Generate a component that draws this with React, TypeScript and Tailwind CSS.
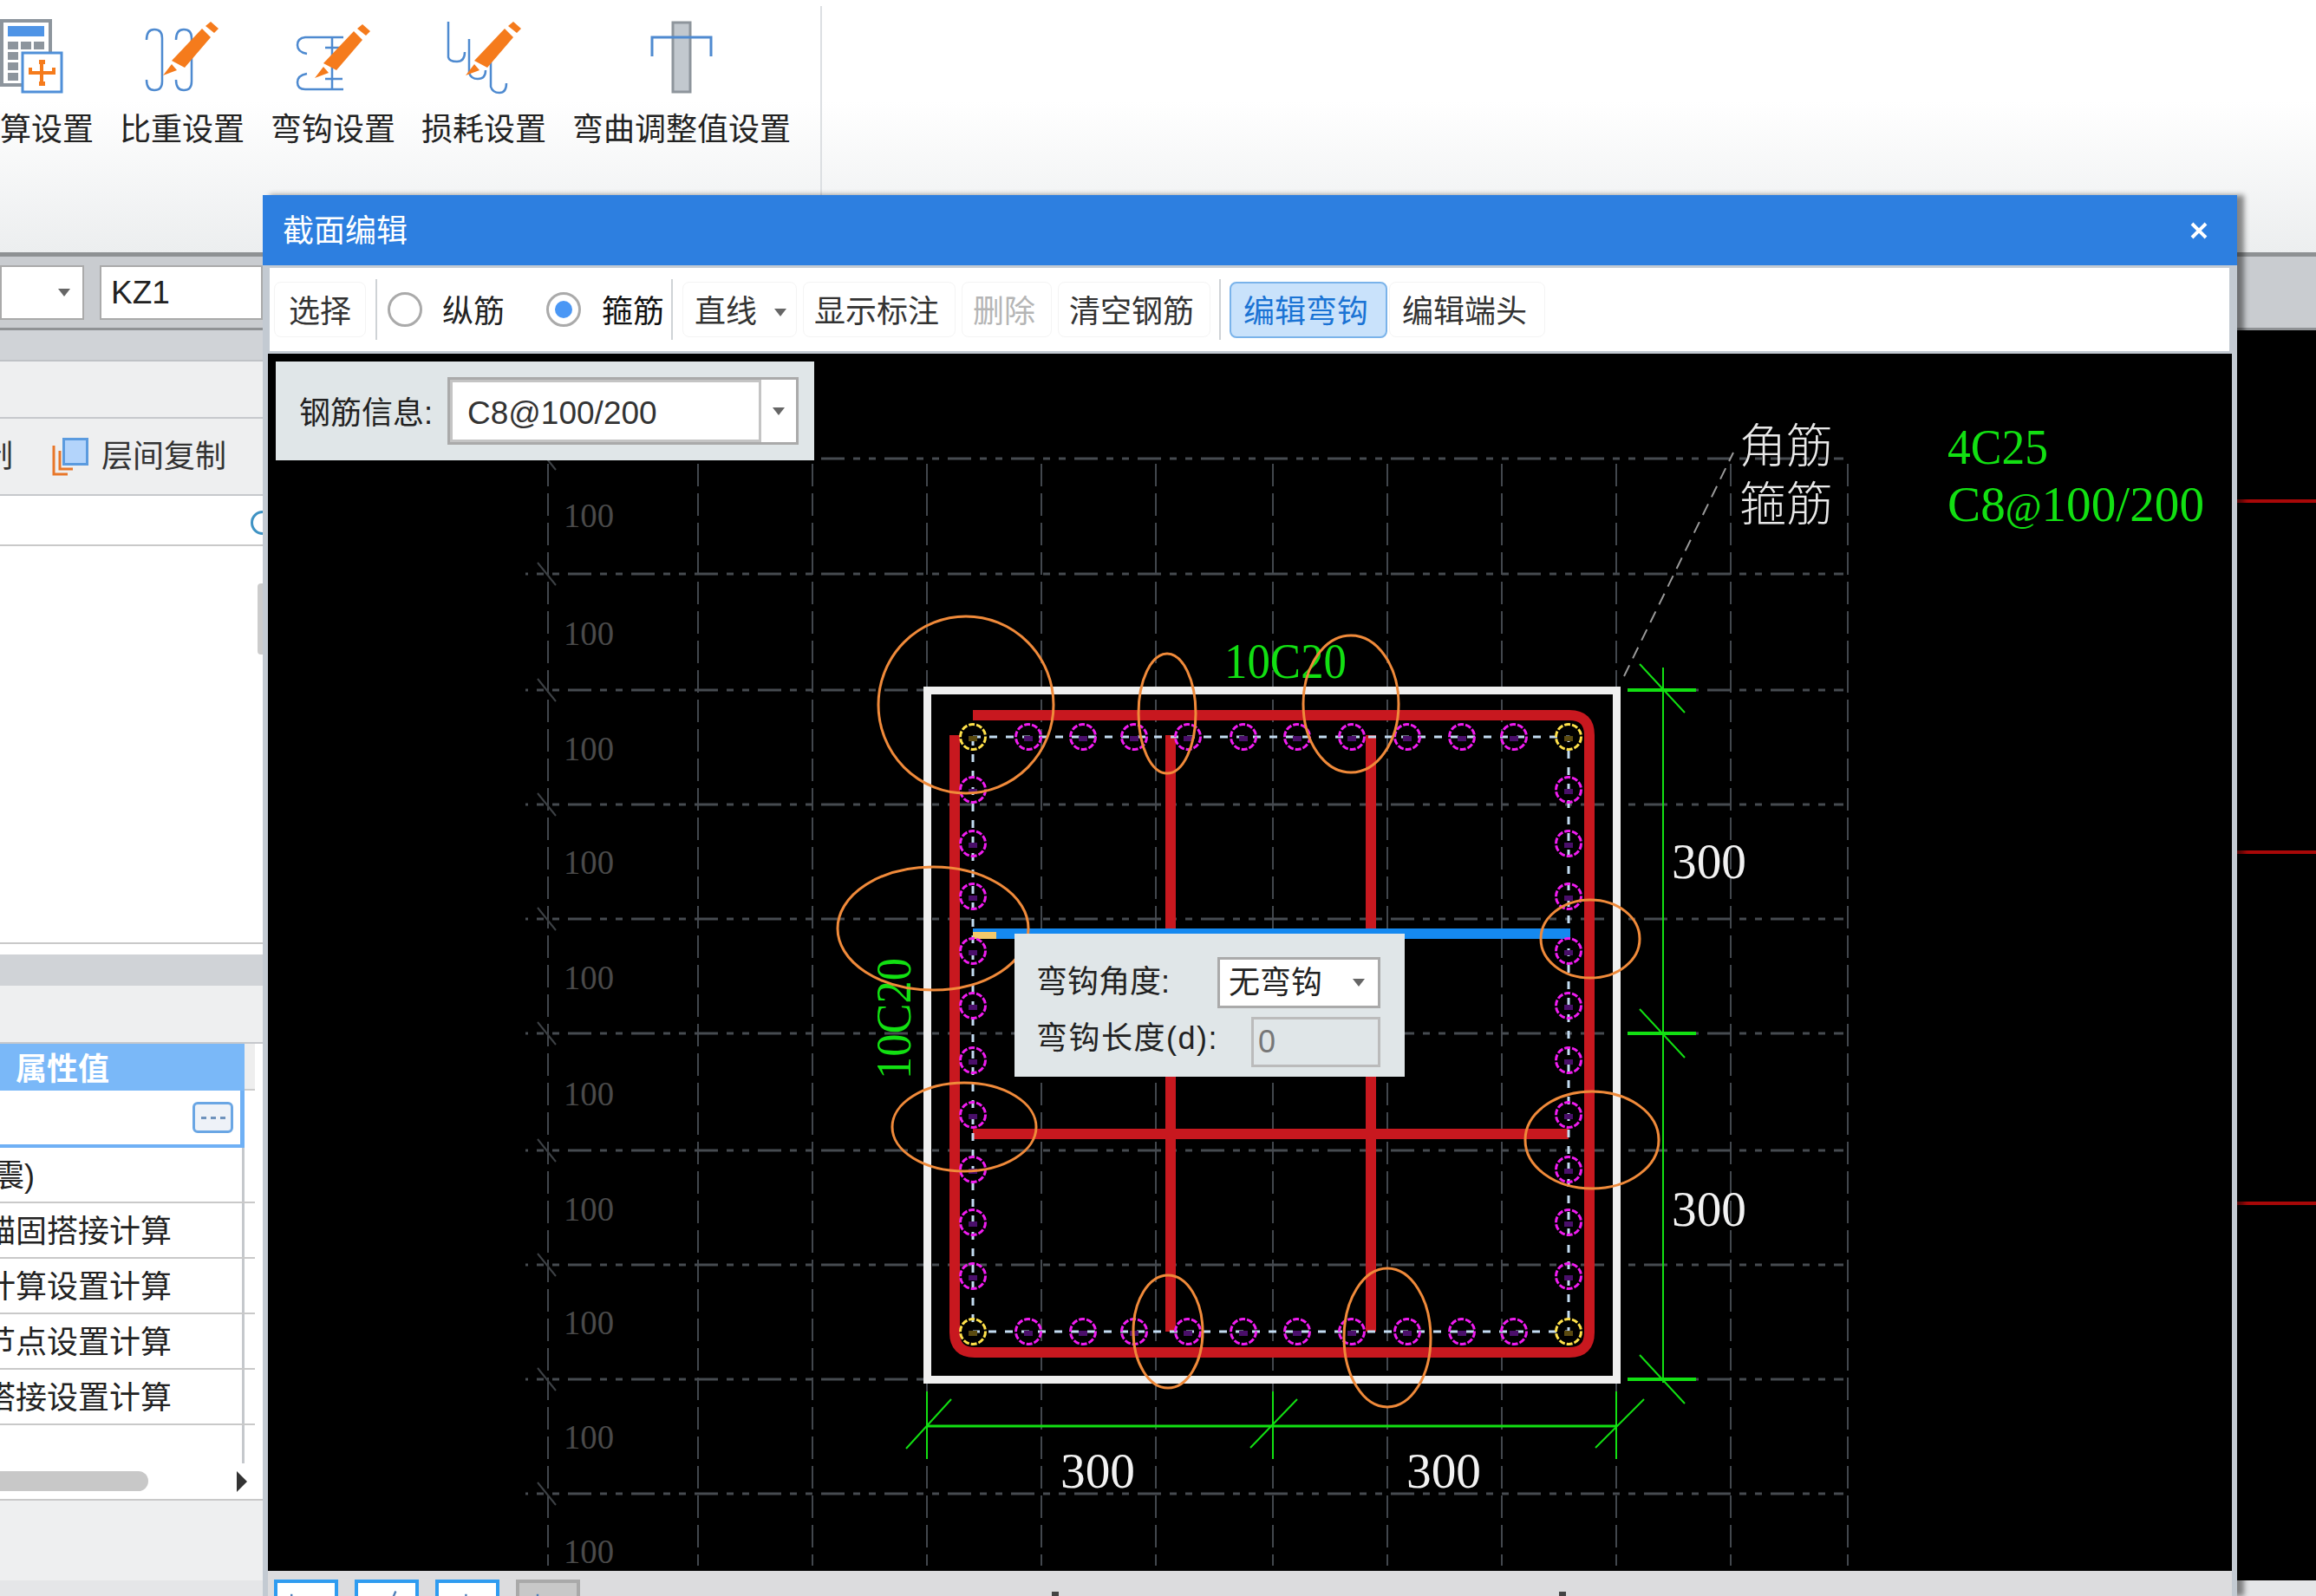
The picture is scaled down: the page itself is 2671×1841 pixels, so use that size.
const fontStack = "font-['Liberation_Sans','Noto_Sans_CJK_SC',sans-serif]"

const gridX = [632, 805, 937, 1069, 1201, 1333, 1468, 1600, 1732, 1864, 1996, 2131]
const gridY = [529, 662, 796, 928, 1060, 1192, 1327, 1459, 1591, 1723]
const labelY = [608, 744, 877, 1008, 1141, 1275, 1408, 1539, 1671, 1803]
const rowX = [1186, 1249, 1308, 1370, 1434, 1496, 1559, 1623, 1686, 1746]
const colY = [911, 973, 1034, 1097, 1160, 1223, 1286, 1349, 1410, 1472]
const ellipses = [
  [1114, 813, 101, 102],
  [1346, 823, 33, 69],
  [1558, 812, 55, 79],
  [1076, 1071, 110, 71],
  [1112, 1300, 83, 51],
  [1834, 1083, 57, 45],
  [1836, 1315, 77, 56],
  [1347, 1536, 40, 65],
  [1600, 1543, 50, 80],
]

function Caret({ className = "" }: { className?: string }) {
  return <span className={`block w-0 h-0 border-x-[7px] border-t-[9px] border-x-transparent border-t-[#666] ${className}`} />
}

function Pencil({ dx, dy }: { dx: number; dy: number }) {
  return (
    <g transform={`translate(${dx} ${dy})`} fill="#f57b1c">
      <polygon points="233,33 243,43 213,78 198,70" />
      <polygon points="198,74 204,81 188,87" />
      <polygon points="243,25 252,33 247,38 237,30" />
    </g>
  )
}

function RibbonItem({ label, x, children }: { label: string; x: number; children: React.ReactNode }) {
  const width = label.length * 36
  return (
    <div className="flex flex-col items-center shrink-0">
      <svg width={width} height={120} viewBox={`${x} 0 ${width} 120`} fill="none" className="block overflow-visible">
        {children}
      </svg>
      <div className="mt-[12px] text-[36px] leading-[36px] text-[#222] whitespace-nowrap">{label}</div>
    </div>
  )
}

function ToolButton({ label, className, caret }: { label: string; className: string; caret?: boolean }) {
  return (
    <div className={`flex items-center justify-center shrink-0 h-[64px] pt-[6px] rounded-lg border border-[#f4f4f4] text-[36px] ${className}`}>
      {label}
      {caret && <Caret className="ml-[20px] mr-[-8px]" />}
    </div>
  )
}

function Radio({ checked, className }: { checked?: boolean; className: string }) {
  return (
    <span className={`flex items-center justify-center shrink-0 w-[40px] h-[40px] rounded-full border-[3px] border-[#aaa] bg-white ${className}`}>
      {checked && <span className="block w-[20px] h-[20px] rounded-full bg-[#4a97f5]" />}
    </span>
  )
}

function Sep({ className = "" }: { className?: string }) {
  return <span className={`block shrink-0 w-[2px] h-[70px] bg-[#cfd3d6] ${className}`} />
}

function TableRow({ text, first }: { text?: string; first?: boolean }) {
  return (
    <div className="flex w-[294px] h-[64px] border-b-2 border-[#c9c9c9]">
      <div className={`flex items-center justify-end w-[198px] pt-[4px] overflow-hidden whitespace-nowrap text-[36px] text-[#222] ${first ? "pr-[158px]" : ""}`}>
        {text}
      </div>
      <div className="w-[84px] border-r-[3px] border-[#c5c8cc]" />
    </div>
  )
}

function LeftPanel() {
  return (
    <div className="relative flex flex-col w-[303px] h-full shrink-0 bg-[#eeeff0] overflow-hidden">
      <div className="h-[36px] shrink-0 bg-[#d0d3d7] border-b-2 border-[#bfc2c6]" />
      <div className="h-[66px] shrink-0 border-b-2 border-[#c6c8cc]" />
      <div className="flex items-center h-[89px] shrink-0 border-b-2 border-[#c6c8cc]">
        <span className="w-[15px] overflow-hidden flex justify-end text-[36px] text-[#333]">制</span>
        <svg width="42" height="44" viewBox="60 501 42 44" fill="none" className="ml-[45px] shrink-0">
          <path d="M62 510 V543 H78 M69 516 V537 H84" stroke="#e8772a" strokeWidth="3" />
          <rect x="73.5" y="502.5" width="27" height="29" fill="#b3d4fb" stroke="#5b9bdf" strokeWidth="3" />
        </svg>
        <span className="ml-[15px] text-[36px] text-[#333] whitespace-nowrap">层间复制</span>
      </div>
      <div className="relative h-[58px] shrink-0 bg-white border-b-2 border-[#c9c9c9]">
        <span className="absolute right-[-14px] top-[17px] w-[28px] h-[28px] rounded-full border-[3px] border-[#3f93c4]" />
      </div>
      <div className="h-[459px] shrink-0 bg-white border-b-2 border-[#c9c9c9]" />
      <div className="h-[12px] shrink-0 bg-white" />
      <div className="h-[36px] shrink-0 bg-[#d0d3d7]" />
      <div className="h-[67px] shrink-0 border-b-2 border-[#c6c8cc]" />

      <div className="flex flex-col h-[527px] shrink-0 bg-white border-b-2 border-[#c9c9c9]">
        <div className="flex h-[54px] shrink-0">
          <div className="flex items-center w-[282px] pl-[18px] pt-[6px] bg-[#7ab8f8] text-[36px] font-bold text-white">属性值</div>
          <div className="w-[12px] bg-[#eeeeee] border-b-2 border-[#cccccc]" />
        </div>
        <div className="flex items-center justify-end w-[282px] h-[66px] shrink-0 pr-[8px] bg-white border-r-[5px] border-b-4 border-[#6fb0f5]">
          <span className="flex items-center justify-center gap-[5px] w-[47px] h-[36px] rounded-md border-[3px] border-[#6aa6e4] bg-[#eef2f8]">
            <span className="w-[6px] h-[3px] bg-[#6f93bd]" />
            <span className="w-[6px] h-[3px] bg-[#6f93bd]" />
            <span className="w-[6px] h-[3px] bg-[#6f93bd]" />
          </span>
        </div>
        <TableRow text="抗震)" first />
        <TableRow text="锚固搭接计算" />
        <TableRow text="计算设置计算" />
        <TableRow text="节点设置计算" />
        <TableRow text="搭接设置计算" />
        <div className="flex-1 w-[282px] border-r-[3px] border-[#c5c8cc]" />
        <div className="relative flex items-center h-[41px] shrink-0">
          <span className="block w-[171px] h-[23px] rounded-r-full bg-[#c8c8c8]" />
          <span className="absolute left-[273px] top-[9px] w-0 h-0 border-y-[12px] border-l-[12px] border-y-transparent border-l-[#333]" />
        </div>
      </div>
      <span className="absolute right-0 top-[292px] w-[6px] h-[82px] rounded-l bg-[#cccccc]" />
    </div>
  )
}

function Node({ x, y, corner }: { x: number; y: number; corner?: boolean }) {
  return (
    <g>
      <rect x={x - 5} y={y - 1} width={10} height={6} fill={corner ? "#5a4a10" : "#4a0f6a"} />
      <circle cx={x} cy={y} r={14.5} fill="none" stroke={corner ? "#ffe14a" : "#f01cf0"} strokeWidth="3" strokeDasharray="7 2" />
    </g>
  )
}

function Drawing() {
  return (
    <svg viewBox="309 408 2265 1404" fill="none" className="absolute inset-0 w-full h-full">
      {gridX.map((x) => (
        <line key={x} x1={x} y1={535} x2={x} y2={1806} stroke="#42474d" strokeWidth="2" strokeDasharray="26 8" />
      ))}
      {gridY.map((y) => (
        <line key={y} x1={606} y1={y} x2={2126} y2={y} stroke="#464b50" strokeWidth="3" strokeDasharray="27 10 8 10 8 10" strokeDashoffset="24" />
      ))}
      {gridY.map((y) => (
        <line key={y} x1={620} y1={y - 13} x2={641} y2={y + 13} stroke="#3d4145" strokeWidth="2" />
      ))}
      {labelY.map((y) => (
        <text key={y} x={650} y={y} fontFamily="Liberation Serif" fontSize="40" fill="#4a4a4a" textLength="58" lengthAdjust="spacingAndGlyphs">100</text>
      ))}

      <line x1={1873} y1={780} x2={1999} y2={522} stroke="#9a9a9a" strokeWidth="2" strokeDasharray="14 9" />

      <rect x={1069.5} y={796.5} width={795} height={795} stroke="#f0f0f0" strokeWidth="9" />

      <g stroke="#c8181f" strokeWidth="12">
        <path d="M1122 825 H1810 Q1833 825 1833 848 V1537 Q1833 1560 1810 1560 H1124 Q1101 1560 1101 1537 V848" />
        <path d="M1350 848 V1536 M1581 848 V1536 M1122 1308 H1809" />
      </g>

      <rect x={1122} y={850} width={687} height={686} stroke="#c3dcf2" strokeWidth="3" strokeDasharray="9 10" />

      <rect x={1122} y={1071} width={689} height={12} fill="#1589f0" />
      <rect x={1122} y={1075} width={27} height={8} fill="#f5c96a" />

      {rowX.flatMap((x) => [
        <Node key={`t${x}`} x={x} y={850} />,
        <Node key={`b${x}`} x={x} y={1536} />,
      ])}
      {colY.flatMap((y) => [
        <Node key={`l${y}`} x={1122} y={y} />,
        <Node key={`r${y}`} x={1809} y={y} />,
      ])}
      {[[1122, 850], [1809, 850], [1122, 1536], [1809, 1536]].map(([x, y]) => (
        <Node key={`c${x}${y}`} x={x} y={y} corner />
      ))}

      <g stroke="#12e012" strokeWidth="2">
        <line x1={1918} y1={770} x2={1918} y2={1595} />
        <line x1={1877} y1={796} x2={1956} y2={796} strokeWidth="4" />
        <line x1={1877} y1={1192} x2={1956} y2={1192} strokeWidth="4" />
        <line x1={1877} y1={1591} x2={1956} y2={1591} strokeWidth="4" />
        <line x1={1891} y1={766} x2={1943} y2={822} />
        <line x1={1891} y1={1164} x2={1943} y2={1220} />
        <line x1={1891} y1={1563} x2={1943} y2={1619} />
        <line x1={1069} y1={1645} x2={1864} y2={1645} strokeWidth="3" />
        <line x1={1069} y1={1605} x2={1069} y2={1683} />
        <line x1={1468} y1={1605} x2={1468} y2={1683} />
        <line x1={1864} y1={1605} x2={1864} y2={1683} />
        <line x1={1045} y1={1671} x2={1097} y2={1614} />
        <line x1={1442} y1={1670} x2={1496} y2={1614} />
        <line x1={1840} y1={1670} x2={1896} y2={1614} />
      </g>

      <g fontFamily="Liberation Serif" fontSize="58" fill="#12e012">
        <text x={1412} y={782} textLength="141" lengthAdjust="spacingAndGlyphs">10C20</text>
        <text x={2246} y={535} textLength="116" lengthAdjust="spacingAndGlyphs">4C25</text>
        <text x={2246} y={601} textLength="296" lengthAdjust="spacingAndGlyphs">
          C8<tspan fontSize="46">@</tspan>100/200
        </text>
        <text transform="translate(1050 1245) rotate(-90)" textLength="140" lengthAdjust="spacingAndGlyphs">10C20</text>
      </g>
      <g fontFamily="Liberation Serif" fontSize="58" fill="#f2f2f2">
        <text x={1223} y={1716} textLength="86" lengthAdjust="spacingAndGlyphs">300</text>
        <text x={1622} y={1716} textLength="86" lengthAdjust="spacingAndGlyphs">300</text>
        <text x={1928} y={1013} textLength="86" lengthAdjust="spacingAndGlyphs">300</text>
        <text x={1928} y={1414} textLength="86" lengthAdjust="spacingAndGlyphs">300</text>
      </g>
      <g fontFamily="Noto Sans CJK SC" fontSize="54" fontWeight="300" fill="#e8e8e8">
        <text x={2006} y={534}>角筋</text>
        <text x={2006} y={601}>箍筋</text>
      </g>

      {ellipses.map(([cx, cy, rx, ry]) => (
        <ellipse key={`${cx}-${cy}`} cx={cx} cy={cy} rx={rx} ry={ry} stroke="#f08a3a" strokeWidth="3" />
      ))}
    </svg>
  )
}

function Dialog() {
  return (
    <div className="absolute left-[303px] top-[225px] flex flex-col w-[2277px] h-[1616px] bg-[#c3cad2] shadow-[8px_0_6px_rgba(0,0,0,0.45)]">
      <div className="flex items-center justify-between h-[81px] shrink-0 pl-[23px] pr-[33px] bg-[#2d7fe0] text-white text-[36px]">
        <span className="pt-[2px]">截面编辑</span>
        <svg width="22" height="22" viewBox="0 0 22 22" fill="none">
          <path d="M3 3 L19 19 M19 3 L3 19" stroke="white" strokeWidth="4" />
        </svg>
      </div>
      <div className="flex items-center h-[96px] shrink-0 mt-[3px] ml-[8px] mr-[9px] pl-[5px] bg-white text-[#222] text-[36px] whitespace-nowrap">
        <ToolButton label="选择" className="w-[106px] text-[#333]" />
        <Sep className="ml-[11px]" />
        <Radio className="ml-[12px]" />
        <span className="ml-[23px] pt-[6px]">纵筋</span>
        <Radio checked className="ml-[48px]" />
        <span className="ml-[24px] pt-[6px] text-[#111]">箍筋</span>
        <Sep className="ml-[8px]" />
        <ToolButton label="直线" className="ml-[11px] w-[132px] pr-[6px] text-[#333]" caret />
        <ToolButton label="显示标注" className="ml-[7px] w-[176px] pr-[6px] text-[#333]" />
        <ToolButton label="删除" className="ml-[7px] w-[104px] pr-[6px] text-[#b5b5b5]" />
        <ToolButton label="清空钢筋" className="ml-[7px] w-[176px] pr-[6px] text-[#333]" />
        <Sep className="ml-[10px]" />
        <div className="flex items-center justify-center ml-[10px] w-[182px] h-[65px] pt-[6px] pr-[6px] shrink-0 rounded-lg border-2 border-[#7ab3ea] bg-[#c9e2fb] text-[#1a73d4]">编辑弯钩</div>
        <ToolButton label="编辑端头" className="ml-[2px] w-[180px] pr-[6px] text-[#333]" />
      </div>
      <div className="relative h-[1404px] shrink-0 mt-[3px] ml-[6px] mr-[6px] bg-black overflow-hidden">
        <Drawing />
        <div className="absolute left-[9px] top-[9px] flex items-center w-[621px] h-[114px] pl-[27px] bg-[#e0e6e8] text-[36px] text-[#222]">
          <span className="pt-[6px] whitespace-nowrap">钢筋信息:</span>
          <div className="flex items-stretch ml-[17px] w-[405px] h-[78px] shrink-0 border-[3px] border-[#aaa] bg-white">
            <div className="flex items-center flex-1 pl-[17px] pt-[6px] border-[3px] border-[#c4c4c4] text-[37px] text-[#333]">C8@100/200</div>
            <div className="flex items-center justify-center w-[40px]"><Caret /></div>
          </div>
        </div>
        <div className="absolute left-[861px] top-[669px] w-[450px] h-[165px] pt-[27px] pl-[25px] pr-[28px] bg-[#e0e6e8] text-[36px] text-[#222] whitespace-nowrap">
          <div className="flex items-center justify-between">
            <span className="pb-[2px]">弯钩角度:</span>
            <div className="flex items-center justify-between w-[188px] h-[59px] pl-[10px] pr-[15px] border-[3px] border-[#aaa] bg-white">
              <span>无弯钩</span>
              <Caret />
            </div>
          </div>
          <div className="flex items-center justify-between mt-[8px]">
            <span className="pb-[8px] tracking-[1.5px]">弯钩长度(d):</span>
            <div className="flex items-center w-[149px] h-[58px] pl-[5px] border-[3px] border-[#bbb] text-[#777]">0</div>
          </div>
        </div>
      </div>
      <div className="relative flex flex-1 gap-[19px] ml-[6px] mr-[6px] pl-[7px] pt-[10px] bg-[#dcdcde] overflow-hidden">
        {[
          "M16 16 V30",
          "M50 12 L42 30",
          "M35 16 V30",
        ].map((d) => (
          <svg key={d} viewBox="0 0 74 40" width="74" height="40" fill="none" className="shrink-0 bg-white border-[4px] border-[#2f9cf0]">
            <path d={d} stroke="#4f7fb8" strokeWidth="3" />
          </svg>
        ))}
        <svg viewBox="0 0 74 40" width="74" height="40" fill="none" className="shrink-0 bg-[#c8c8c8] border-[4px] border-[#a9a9a9]">
          <path d="M22 16 V30" stroke="#4f7fb8" strokeWidth="3" />
        </svg>
        <span className="absolute left-[904px] top-[24px] w-[8px] h-[5px] bg-[#444]" />
        <span className="absolute left-[1489px] top-[24px] w-[8px] h-[5px] bg-[#444]" />
      </div>
    </div>
  )
}

export default function App() {
  return (
    <div className={`relative flex flex-col w-[2671px] h-[1841px] overflow-hidden bg-[#e5e6e8] ${fontStack}`}>
      <div className="flex items-start h-[291px] shrink-0 bg-gradient-to-b from-white from-40% to-[#eceeef]">
        <div className="flex gap-[30px] ml-[-36px]">
          <RibbonItem label="计算设置" x={-36}>
            <rect x="2" y="24" width="56" height="74" fill="white" stroke="#8d959d" strokeWidth="4" />
            <rect x="9" y="30" width="42" height="12" fill="#4f94e6" />
            <path d="M9 48h12v9H9z M24 48h12v9H24z M39 48h12v9H39z M9 60h12v9H9z M9 72h12v9H9z M9 84h12v9H9z" fill="#8d959d" />
            <rect x="26" y="61" width="45" height="45" fill="white" stroke="#4f8fd8" strokeWidth="3" />
            <path d="M48 72 V96 M35 78 V84 H62 V78" stroke="#f57b1c" strokeWidth="4" />
            <path d="M45 69h7v5h-7z M45 94h7v5h-7z" fill="#f57b1c" />
          </RibbonItem>
          <RibbonItem label="比重设置" x={138}>
            <g stroke="#4e8ad0" strokeWidth="2.5">
              <path d="M169 46 Q169 34 178 34 Q187 34 187 44 V94 Q187 104 178 104 Q169 104 169 92" />
              <path d="M203 46 Q203 34 212 34 Q221 34 221 44 V94 Q221 104 212 104 Q203 104 203 92" />
            </g>
            <Pencil dx={0} dy={0} />
          </RibbonItem>
          <RibbonItem label="弯钩设置" x={312}>
            <path
              d="M354 62 Q343 60 343 52 Q343 44 352 43 H396 M354 85 Q343 87 343 95 Q343 103 352 103 H396 M383 43 V103 M375 55 H395 M375 91 H395"
              stroke="#4e8ad0"
              strokeWidth="2.5"
            />
            <Pencil dx={175} dy={3} />
          </RibbonItem>
          <RibbonItem label="损耗设置" x={486}>
            <path
              d="M517 25 V66 Q518 71 527 71 Q536 71 536 60 M541 45 V84 Q543 91 551 91 Q560 91 560 81 M566 68 V100 Q568 107 576 107 Q584 107 584 96"
              stroke="#4e8ad0"
              strokeWidth="2.5"
            />
            <Pencil dx={349} dy={0} />
          </RibbonItem>
          <RibbonItem label="弯曲调整值设置" x={660}>
            <rect x="776" y="26" width="20" height="80" fill="#c2c8ce" stroke="#8e959c" strokeWidth="3" />
            <path d="M752 65 V43 H820 V65" stroke="#4f8ad0" strokeWidth="3" />
          </RibbonItem>
        </div>
        <span className="block w-[2px] h-[218px] mt-[7px] ml-[34px] shrink-0 bg-[#dcdfe2]" />
      </div>
      <div className="h-[5px] shrink-0 bg-[#8e9193]" />
      <div className="flex h-[85px] shrink-0 pt-[10px] bg-[#c9ccd0] border-b-[3px] border-[#8f9295]">
        <div className="flex items-center justify-end w-[97px] h-[63px] pr-[14px] bg-white border-2 border-[#aaaaaa]">
          <Caret />
        </div>
        <div className="flex items-center w-[188px] h-[63px] ml-[18px] pl-[11px] bg-white border-2 border-[#aaaaaa] text-[37px] text-[#222]">KZ1</div>
      </div>
      <div className="flex h-[1442px] shrink-0 bg-black">
        <LeftPanel />
        <div className="flex-1 flex flex-col">
          <div className="h-[195px] shrink-0 ml-[2277px]" />
          <div className="h-[4px] shrink-0 ml-[2277px] bg-[#a80808]" />
          <div className="h-[401px] shrink-0" />
          <div className="h-[4px] shrink-0 ml-[2277px] bg-[#a80808]" />
          <div className="h-[401px] shrink-0" />
          <div className="h-[4px] shrink-0 ml-[2277px] bg-[#a80808]" />
        </div>
      </div>
      <Dialog />
    </div>
  )
}
